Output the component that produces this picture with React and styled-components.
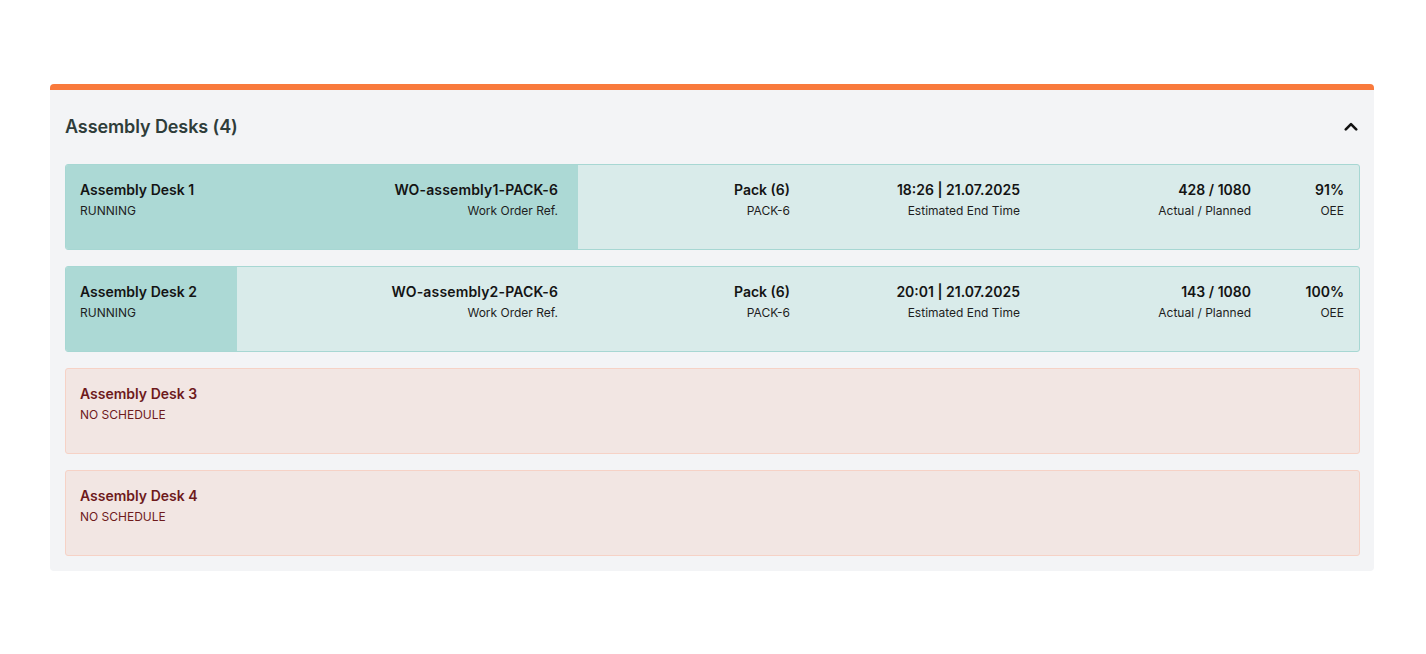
import React from "react";
import styled, { createGlobalStyle } from "styled-components";

const GlobalStyle = createGlobalStyle`
  html, body {
    margin: 0;
    padding: 0;
    background: #ffffff;
  }
  body {
    font-family: Inter, "Open Sans", "Liberation Sans", sans-serif;
    -webkit-font-smoothing: antialiased;
  }
  *, *::before, *::after {
    box-sizing: border-box;
  }
`;

const Page = styled.div`
  padding: 84px 52px 0 50px;
`;

const Panel = styled.section`
  background: #f3f4f6;
  border-top: 6px solid #f97a3c;
  border-radius: 4px;
  padding-bottom: 15px;
`;

const Header = styled.header`
  height: 74px;
  display: flex;
  align-items: center;
  justify-content: space-between;
  padding: 0 15px 2px 15px;
`;

const Title = styled.h2`
  margin: 0;
  font-size: 18px;
  font-weight: 600;
  color: #2f3d3a;
  letter-spacing: -0.1px;
`;

const Toggle = styled.button`
  border: 0;
  background: none;
  padding: 0;
  width: 16px;
  height: 16px;
  display: flex;
  align-items: center;
  justify-content: center;
  cursor: pointer;
  color: #111;
`;

const List = styled.div`
  display: flex;
  flex-direction: column;
  gap: 16px;
  padding: 0 14px 0 15px;
`;

const Card = styled.div`
  position: relative;
  overflow: hidden;
  height: 86px;
  border-radius: 3px;
  border: 1px solid ${(p) => (p.$idle ? "#f6d2c6" : "#a7d7d3")};
  background: ${(p) => (p.$idle ? "#f2e6e3" : "#d9ebea")};
`;

const Progress = styled.div`
  position: absolute;
  left: 0;
  top: 0;
  bottom: 0;
  background: #acd9d5;
`;

const Row = styled.div`
  position: relative;
  display: grid;
  grid-template-columns: 478fr 232fr 230fr 231fr 93fr;
  padding: 15px 15px 0 14px;
`;

const Cell = styled.div`
  display: flex;
  flex-direction: column;
  align-items: ${(p) => (p.$left ? "flex-start" : "flex-end")};
  text-align: ${(p) => (p.$left ? "left" : "right")};
  min-width: 0;
`;

const NameCell = styled.div`
  display: flex;
  justify-content: space-between;
  align-items: flex-start;
`;

const Value = styled.div`
  font-size: 14px;
  line-height: 20px;
  font-weight: 600;
  color: ${(p) => (p.$idle ? "#6e1a1c" : "#141414")};
  white-space: nowrap;
  letter-spacing: ${(p) => (p.$wide ? "0.15px" : "0")};
`;

const Label = styled.div`
  font-size: 12px;
  line-height: 16px;
  font-weight: 400;
  color: ${(p) => (p.$idle ? "#6e1a1c" : "#1e1e1e")};
  white-space: nowrap;
  margin-top: 3px;
`;

const ChevronUp = () => (
  <svg width="14" height="9" viewBox="0 0 14 9" fill="none">
    <path
      d="M1.8 7.4 L7 2.2 L12.2 7.4"
      stroke="currentColor"
      strokeWidth="2.6"
      strokeLinecap="round"
      strokeLinejoin="round"
    />
  </svg>
);

const desks = [
  {
    name: "Assembly Desk 1",
    status: "RUNNING",
    wo: "WO-assembly1-PACK-6",
    product: "Pack (6)",
    code: "PACK-6",
    end: "18:26 | 21.07.2025",
    actual: 428,
    planned: 1080,
    oee: "91%",
  },
  {
    name: "Assembly Desk 2",
    status: "RUNNING",
    wo: "WO-assembly2-PACK-6",
    product: "Pack (6)",
    code: "PACK-6",
    end: "20:01 | 21.07.2025",
    actual: 143,
    planned: 1080,
    oee: "100%",
  },
  { name: "Assembly Desk 3", status: "NO SCHEDULE" },
  { name: "Assembly Desk 4", status: "NO SCHEDULE" },
];

function DeskCard({ desk }) {
  const idle = !desk.wo;
  if (idle) {
    return (
      <Card $idle>
        <Row>
          <Cell $left>
            <Value $idle>{desk.name}</Value>
            <Label $idle>{desk.status}</Label>
          </Cell>
        </Row>
      </Card>
    );
  }
  const pct = (desk.actual / desk.planned) * 100;
  return (
    <Card>
      <Progress style={{ width: `${pct}%` }} />
      <Row>
        <NameCell>
          <Cell $left>
            <Value>{desk.name}</Value>
            <Label>{desk.status}</Label>
          </Cell>
          <Cell>
            <Value $wide>{desk.wo}</Value>
            <Label>Work Order Ref.</Label>
          </Cell>
        </NameCell>
        <Cell>
          <Value>{desk.product}</Value>
          <Label>{desk.code}</Label>
        </Cell>
        <Cell>
          <Value>{desk.end}</Value>
          <Label>Estimated End Time</Label>
        </Cell>
        <Cell>
          <Value>
            {desk.actual} / {desk.planned}
          </Value>
          <Label>Actual / Planned</Label>
        </Cell>
        <Cell>
          <Value>{desk.oee}</Value>
          <Label>OEE</Label>
        </Cell>
      </Row>
    </Card>
  );
}

export default function App() {
  return (
    <>
      <GlobalStyle />
      <Page>
        <Panel>
          <Header>
            <Title>Assembly Desks ({desks.length})</Title>
            <Toggle aria-label="Collapse">
              <ChevronUp />
            </Toggle>
          </Header>
          <List>
            {desks.map((d) => (
              <DeskCard key={d.name} desk={d} />
            ))}
          </List>
        </Panel>
      </Page>
    </>
  );
}
